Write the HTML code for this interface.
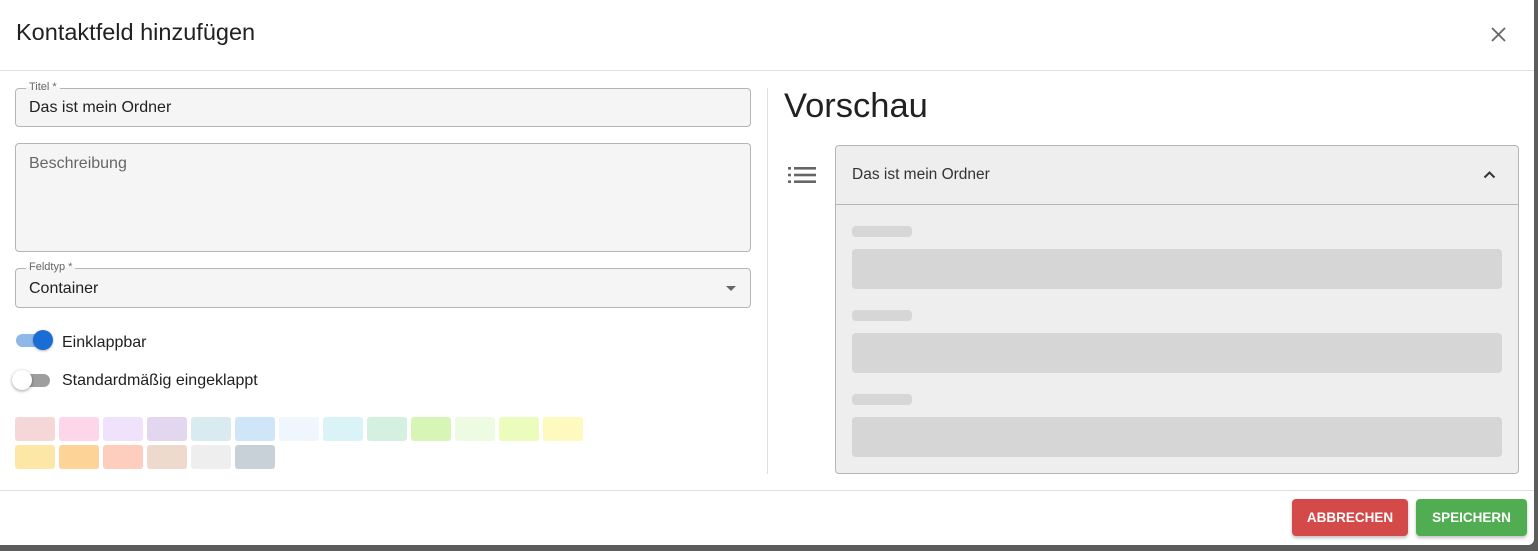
<!DOCTYPE html>
<html><head><meta charset="utf-8"><style>
*{box-sizing:border-box;margin:0;padding:0}
body{width:1538px;height:551px;background:#5c5c5c;font-family:"Liberation Sans",sans-serif;position:relative;overflow:hidden;color:#212121}
.dlg{position:absolute;left:0;top:0;width:1534px;height:545px;background:#fff;border-radius:0 0 6px 0}
.abs{position:absolute}
.field{position:absolute;background:#f5f5f5;border:1px solid #b5b5b5;border-radius:4px}
.lbl{position:absolute;top:-8px;left:10px;background:linear-gradient(#fff 50%,#f5f5f5 50%);padding:0 3px;font-size:11px;color:#666}
.val{position:absolute;left:13px;font-size:16px;color:#212121}
.sw{position:absolute;width:40px;height:24px;border-radius:3px}
.bar{position:absolute;background:#d6d6d6;border-radius:4px}
</style></head><body>
<div class="dlg">
<div class="abs" style="left:16px;top:19px;font-size:23.5px;color:#212121">Kontaktfeld hinzufügen</div>
<svg class="abs" style="left:1491px;top:27px" width="15" height="15" viewBox="0 0 15 15"><path d="M1 1L14 14M14 1L1 14" stroke="#666" stroke-width="1.8"/></svg>
<div class="abs" style="left:0;top:70px;width:1534px;height:1px;background:#e0e0e0"></div>

<div class="field" style="left:15px;top:88px;width:736px;height:39px"><span class="lbl">Titel *</span><span class="val" style="top:10px">Das ist mein Ordner</span></div>
<div class="field" style="left:15px;top:143px;width:736px;height:109px"><span class="val" style="top:11px;color:#666">Beschreibung</span></div>
<div class="field" style="left:15px;top:268px;width:736px;height:40px"><span class="lbl">Feldtyp *</span><span class="val" style="top:11px">Container</span>
<svg class="abs" style="left:710px;top:17px" width="10" height="5"><path d="M0 0L10 0L5 5Z" fill="#666"/></svg></div>

<div class="abs" style="left:16px;top:334px;width:32px;height:13px;border-radius:7px;background:#8fb7e8"></div>
<div class="abs" style="left:33px;top:330px;width:20px;height:20px;border-radius:50%;background:#1a6dd4;box-shadow:0 1px 2px rgba(0,0,0,.3)"></div>
<div class="abs" style="left:62px;top:334px;font-size:16px">Einklappbar</div>
<div class="abs" style="left:17px;top:374px;width:33px;height:13px;border-radius:7px;background:#9e9e9e"></div>
<div class="abs" style="left:12px;top:370px;width:20px;height:20px;border-radius:50%;background:#fff;box-shadow:0 1px 3px rgba(0,0,0,.4)"></div>
<div class="abs" style="left:62px;top:372px;font-size:16px">Standardmäßig eingeklappt</div>

<div class="sw" style="left:15px;top:417px;background:#f5d7d8"></div>
<div class="sw" style="left:59px;top:417px;background:#fdd7e9"></div>
<div class="sw" style="left:103px;top:417px;background:#f0e2fb"></div>
<div class="sw" style="left:147px;top:417px;background:#e3d6ef"></div>
<div class="sw" style="left:191px;top:417px;background:#d9ebf1"></div>
<div class="sw" style="left:235px;top:417px;background:#d0e5f8"></div>
<div class="sw" style="left:279px;top:417px;background:#eff6fd"></div>
<div class="sw" style="left:323px;top:417px;background:#d9f3f7"></div>
<div class="sw" style="left:367px;top:417px;background:#d4f0e0"></div>
<div class="sw" style="left:411px;top:417px;background:#d7f5b6"></div>
<div class="sw" style="left:455px;top:417px;background:#eefbe3"></div>
<div class="sw" style="left:499px;top:417px;background:#ebfcbc"></div>
<div class="sw" style="left:543px;top:417px;background:#fef9bd"></div>
<div class="sw" style="left:15px;top:445px;background:#fde7a7"></div>
<div class="sw" style="left:59px;top:445px;background:#fdd398"></div>
<div class="sw" style="left:103px;top:445px;background:#fdcdbe"></div>
<div class="sw" style="left:147px;top:445px;background:#eed9cd"></div>
<div class="sw" style="left:191px;top:445px;background:#eeeeee"></div>
<div class="sw" style="left:235px;top:445px;background:#c9d1d8"></div>

<div class="abs" style="left:767px;top:88px;width:1px;height:386px;background:#e0e0e0"></div>
<div class="abs" style="left:784px;top:87px;font-size:34.5px;color:#212121">Vorschau</div>
<svg class="abs" style="left:788px;top:167px" width="28" height="16" viewBox="0 0 28 16"><g fill="#666"><rect x="0" y="0" width="3" height="2.6"/><rect x="0" y="6.7" width="3" height="2.6"/><rect x="0" y="13.4" width="3" height="2.6"/><rect x="6" y="0" width="22" height="2.6"/><rect x="6" y="6.7" width="22" height="2.6"/><rect x="6" y="13.4" width="22" height="2.6"/></g></svg>
<div class="abs" style="left:835px;top:145px;width:684px;height:60px;background:#eeeeee;border:1px solid #b5b5b5;border-radius:4px 4px 0 0"></div>
<div class="abs" style="left:852px;top:166px;font-size:15.5px;color:#333">Das ist mein Ordner</div>
<svg class="abs" style="left:1483px;top:170px" width="13" height="9"><path d="M1.5 7.5L6.5 2.5L11.5 7.5" stroke="#333" stroke-width="2" fill="none"/></svg>
<div class="abs" style="left:835px;top:205px;width:684px;height:269px;background:#eeeeee;border:1px solid #b5b5b5;border-top:none;border-radius:0 0 4px 4px"></div>
<div class="bar" style="left:852px;top:226px;width:60px;height:11px"></div>
<div class="bar" style="left:852px;top:249px;width:650px;height:40px"></div>
<div class="bar" style="left:852px;top:310px;width:60px;height:11px"></div>
<div class="bar" style="left:852px;top:333px;width:650px;height:40px"></div>
<div class="bar" style="left:852px;top:394px;width:60px;height:11px"></div>
<div class="bar" style="left:852px;top:417px;width:650px;height:40px"></div>

<div class="abs" style="left:0;top:490px;width:1534px;height:1px;background:#e0e0e0"></div>
<div class="abs" style="left:1292px;top:499px;width:116px;height:37px;background:#d44a48;border-radius:4px;box-shadow:0 2px 3px rgba(0,0,0,.25);color:#fff;font-weight:bold;font-size:13.5px;text-align:center;line-height:37px">ABBRECHEN</div>
<div class="abs" style="left:1416px;top:499px;width:111px;height:37px;background:#51ad52;border-radius:4px;box-shadow:0 2px 3px rgba(0,0,0,.25);color:#fff;font-weight:bold;font-size:13.5px;text-align:center;line-height:37px">SPEICHERN</div>
</div>
</body></html>
